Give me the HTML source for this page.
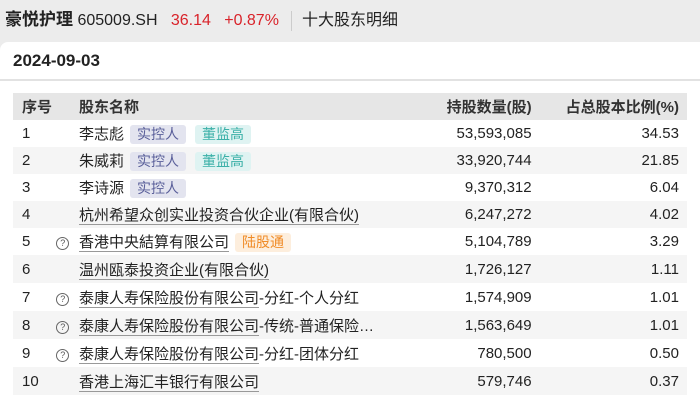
<!DOCTYPE html>
<html><head><meta charset="utf-8"><style>
body{margin:0;width:700px;height:403px;overflow:hidden;background:#ececec;font-family:"Liberation Sans","Noto Sans CJK SC",sans-serif;color:#222;position:relative}
.hd{position:absolute;left:5px;top:9px;font-size:16px;white-space:nowrap;line-height:22px}
.hd b{font-size:17px}
.red{color:#d9232a}
.sep{display:inline-block;width:1px;height:20px;background:#ccc;vertical-align:middle;margin:0 10px 0 12px}
.card{position:absolute;left:0;top:42px;width:700px;height:361px;background:#fff;border-top-left-radius:8px}
.date{position:absolute;left:13px;top:9px;font-size:17px;font-weight:bold}
.line{position:absolute;left:0;top:37px;width:700px;height:2px;background:#e2e2e2}
table{position:absolute;left:13px;top:51px;width:674px;border-collapse:collapse;font-size:15px}
td{padding:0;white-space:nowrap}
tr.h{background:#e6e6e6;height:27px;font-weight:bold;color:#333}
tr.g{background:#f5f5f5}
.c1{width:38px;padding-left:9px}.c2{width:31px;color:#555}.num{text-align:right}
.c4{width:220px;padding-right:17px}.c5{padding-right:8px;width:145px}
u{text-decoration:none;border-bottom:1px solid #999}
.q{display:inline-block;width:11px;height:11px;border:1px solid #666;border-radius:50%;font-size:9px;line-height:11px;text-align:center;font-weight:normal}
.t{display:inline-block;font-size:14px;line-height:19px;padding:0 7px;border-radius:3px;margin-left:6px}
.t1{background:#e3e4ef;color:#5a5f9a}.t2{background:#dff3f2;color:#3bb0a8;margin-left:9px}.t3{background:#fdeedd;color:#f08c28}
</style></head><body>
<div class="hd"><b>豪悦护理</b> 605009.SH &nbsp;&nbsp;<span class="red">36.14 &nbsp;&nbsp;+0.87%</span><span class="sep"></span>十大股东明细</div>
<div class="card">
<div class="date">2024-09-03</div>
<div class="line"></div>
<table>
<tr class="h"><td class="c1">序号</td><td class="c2"></td><td>股东名称</td><td class="num c4">持股数量(股)</td><td class="num c5">占总股本比例(%)</td></tr>
<tr style="height:27px"><td class="c1">1</td><td class="c2"></td><td>李志彪<span class="t t1">实控人</span><span class="t t2">董监高</span></td><td class="num c4">53,593,085</td><td class="num c5">34.53</td></tr>
<tr class="g" style="height:27px"><td class="c1">2</td><td class="c2"></td><td>朱威莉<span class="t t1">实控人</span><span class="t t2">董监高</span></td><td class="num c4">33,920,744</td><td class="num c5">21.85</td></tr>
<tr style="height:27px"><td class="c1">3</td><td class="c2"></td><td>李诗源<span class="t t1">实控人</span></td><td class="num c4">9,370,312</td><td class="num c5">6.04</td></tr>
<tr class="g" style="height:27px"><td class="c1">4</td><td class="c2"></td><td><u>杭州希望众创实业投资合伙企业(有限合伙)</u></td><td class="num c4">6,247,272</td><td class="num c5">4.02</td></tr>
<tr style="height:27px"><td class="c1">5</td><td class="c2"><span class="q">?</span></td><td><u>香港中央結算有限公司</u><span class="t t3">陆股通</span></td><td class="num c4">5,104,789</td><td class="num c5">3.29</td></tr>
<tr class="g" style="height:28px"><td class="c1">6</td><td class="c2"></td><td><u>温州瓯泰投资企业(有限合伙)</u></td><td class="num c4">1,726,127</td><td class="num c5">1.11</td></tr>
<tr style="height:28px"><td class="c1">7</td><td class="c2"><span class="q">?</span></td><td><u>泰康人寿保险股份有限公司</u>-分红-个人分红</td><td class="num c4">1,574,909</td><td class="num c5">1.01</td></tr>
<tr class="g" style="height:28px"><td class="c1">8</td><td class="c2"><span class="q">?</span></td><td><u>泰康人寿保险股份有限公司</u>-传统-普通保险…</td><td class="num c4">1,563,649</td><td class="num c5">1.01</td></tr>
<tr style="height:28px"><td class="c1">9</td><td class="c2"><span class="q">?</span></td><td><u>泰康人寿保险股份有限公司</u>-分红-团体分红</td><td class="num c4">780,500</td><td class="num c5">0.50</td></tr>
<tr class="g" style="height:28px"><td class="c1">10</td><td class="c2"></td><td><u>香港上海汇丰银行有限公司</u></td><td class="num c4">579,746</td><td class="num c5">0.37</td></tr>
</table>
</div>
</body></html>
